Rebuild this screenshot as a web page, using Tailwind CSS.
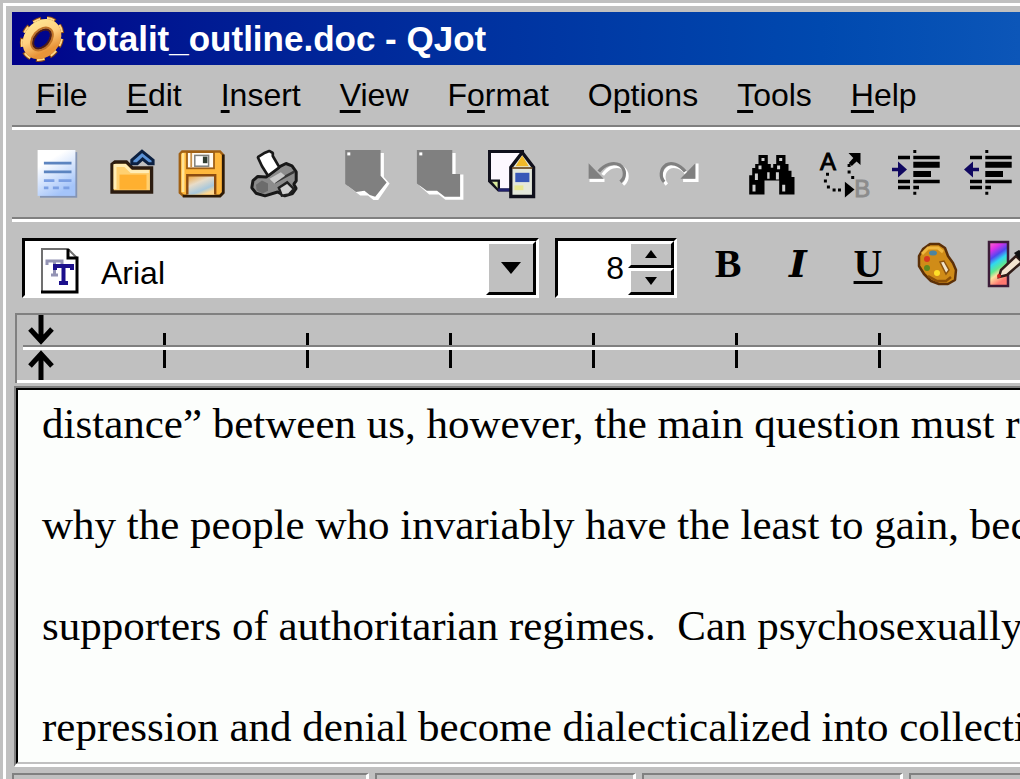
<!DOCTYPE html>
<html lang="en">
<head>
    <meta charset="UTF-8" />
    <title>totalit_outline.doc - QJot</title>
    <script src="https://cdn.jsdelivr.net/npm/@tailwindcss/browser@4"></script>
</head>
<body class="bg-[#c0c0c0] font-['Liberation_Sans',Arial,sans-serif] text-[32px] text-black">

<div class="h-screen overflow-hidden flex flex-col pt-[3px] pl-[3px]">
<div class="flex-1 min-h-0 flex flex-col border-t-3 border-l-3 border-white pt-[6px] pl-[6px]">

    <!-- Title bar -->
    <header class="flex items-center gap-2 h-[53px] shrink-0 pl-[6px] bg-linear-to-r from-[#00008a] to-[#0c56b8]">
        <svg class="w-12 h-12 shrink-0" viewBox="0 0 48 48" aria-hidden="true">
            <defs>
                <linearGradient id="gold" x1="0" y1="0" x2="1" y2="0.6">
                    <stop offset="0" stop-color="#ffe490" />
                    <stop offset="0.5" stop-color="#ffd080" />
                    <stop offset="1" stop-color="#e89438" />
                </linearGradient>
            </defs>
            <g transform="rotate(40 24 24)" fill="none">
                <ellipse cx="24" cy="24" rx="17" ry="21" stroke="#8a4818" stroke-width="7" stroke-dasharray="8 5.3" />
                <ellipse cx="24" cy="24" rx="17" ry="21" stroke="#ffd888" stroke-width="5" stroke-dasharray="7 6.3" />
                <ellipse cx="24" cy="24" rx="12" ry="16" stroke="#a05c20" stroke-width="11" />
                <ellipse cx="24" cy="24" rx="12.5" ry="16.5" stroke="url(#gold)" stroke-width="10" />
                <ellipse cx="24" cy="24" rx="9" ry="13" stroke="#c07428" stroke-width="2" />
                <ellipse cx="24" cy="24" rx="7" ry="11" stroke="#4c1c18" stroke-width="2" />
            </g>
        </svg>
        <h1 class="text-[35px] leading-none font-bold text-white whitespace-nowrap">totalit_outline.doc - QJot</h1>
    </header>

    <!-- Menu bar -->
    <nav class="flex items-center gap-[39px] h-[60px] shrink-0 pl-6 whitespace-nowrap">
        <a href="#file"><span class="underline decoration-3 underline-offset-4">F</span>ile</a>
        <a href="#edit"><span class="underline decoration-3 underline-offset-4">E</span>dit</a>
        <a href="#insert"><span class="underline decoration-3 underline-offset-4">I</span>nsert</a>
        <a href="#view"><span class="underline decoration-3 underline-offset-4">V</span>iew</a>
        <a href="#format">F<span class="underline decoration-3 underline-offset-4">o</span>rmat</a>
        <a href="#options">O<span class="underline decoration-3 underline-offset-4">p</span>tions</a>
        <a href="#tools"><span class="underline decoration-3 underline-offset-4">T</span>ools</a>
        <a href="#help"><span class="underline decoration-3 underline-offset-4">H</span>elp</a>
    </nav>
    <div class="h-[5px] shrink-0 border-t-2 border-b-3 border-t-[#808080] border-b-white"></div>

    <!-- Standard toolbar -->
    <div class="flex items-center gap-[22px] h-[87px] shrink-0 pl-[10px]">
        <div class="flex">
            <button type="button" aria-label="New" class="w-[72px] shrink-0 flex justify-center">
                <svg class="w-12 h-12 overflow-visible" viewBox="0 0 16 16">
                    <defs>
                        <linearGradient id="sheet" x1="0" y1="0" x2="0.5" y2="1">
                            <stop offset="0.3" stop-color="#ffffff" />
                            <stop offset="1" stop-color="#a4c4fa" />
                        </linearGradient>
                    </defs>
                    <rect x="2" y="0.7" width="12.4" height="15.2" fill="#8494b4" />
                    <rect x="1.2" y="0" width="12.6" height="15.3" fill="url(#sheet)" />
                    <path d="M3.3 4.4h9.2M3.3 7.3h9.2" stroke="#5c84c0" stroke-width="0.9" />
                    <path d="M3.3 10.2h3.5m1.4 0h4.3M3.3 12.6h1.5m1.5 0h2m1.5 0h2" stroke="#7ca0e4" stroke-width="0.9" />
                </svg>
            </button>
            <button type="button" aria-label="Open" class="w-[72px] shrink-0 flex justify-center">
                <svg class="w-12 h-12 overflow-visible" viewBox="0 0 16 16">
                    <path d="M2 14V4.8L3 4h3.8l2 2h6.4v8z" fill="#ffd070" stroke="#2c1c10" stroke-width="1.1" />
                    <path d="M3 13V5.2h3.4l2 2h5.9" fill="none" stroke="#ffecb4" stroke-width="1" />
                    <rect x="4.5" y="8.2" width="9" height="5" fill="#ffb030" />
                    <path d="M8.6 3.4L12 0.4l3.7 3V4.600h-1.500L12.200 3 10.400 4.600H8.600z" fill="#5c94d8" stroke="#0c2040" stroke-width="1" />
                </svg>
            </button>
            <button type="button" aria-label="Save" class="w-[72px] shrink-0 flex justify-center">
                <svg class="w-12 h-12 overflow-visible" viewBox="0 0 16 16">
                    <defs>
                        <linearGradient id="label" x1="0" y1="0" x2="0.6" y2="1">
                            <stop offset="0" stop-color="#f0a030" />
                            <stop offset="0.45" stop-color="#e8dcc8" />
                            <stop offset="0.8" stop-color="#a8c8dc" />
                            <stop offset="1" stop-color="#ffd890" />
                        </linearGradient>
                    </defs>
                    <path d="M1.4 0.5H14L15 1.6V14.3L14 15.3H1.8L0.6 14.2V1.3z" fill="#ffb83c" stroke="#a06014" stroke-width="0.8" />
                    <path d="M15.1 1.5V14.2L14 15.4H1.6" fill="none" stroke="#2c1a08" stroke-width="0.9" />
                    <path d="M1.7 1v13" stroke="#ffe498" stroke-width="0.9" />
                    <rect x="3" y="0.7" width="9" height="5.4" fill="#fffaf0" stroke="#a06014" stroke-width="0.6" />
                    <path d="M4.4 1v4.8" stroke="#c89048" stroke-width="0.6" />
                    <rect x="5.6" y="1.8" width="4.6" height="3.6" fill="#fff" stroke="#80807c" stroke-width="0.5" />
                    <rect x="8.3" y="2.2" width="1.5" height="2.2" fill="#303c30" />
                    <rect x="3.1" y="8.3" width="9.3" height="6.6" fill="url(#label)" />
                    <path d="M3.1 14.8V8.4h9.3v6.4" fill="none" stroke="#8c4c10" stroke-width="0.8" />
                </svg>
            </button>
            <button type="button" aria-label="Print" class="w-[72px] shrink-0 flex justify-center">
                <svg class="w-12 h-12 overflow-visible" viewBox="0 0 16 16">
                    <path d="M1 10.2L2.6 8.8 5.4 9l4-3.2L12 4.5l2 .8 1.4 2v3l-.8 1.1.8 1.4-1.2 1.7-2.6.8L9.2 14 5 15.3 2 14.4.6 12.6z" fill="#8c8c8c" stroke="#181818" stroke-width="1" stroke-linejoin="bevel" />
                    <path d="M8.2 10.8L14.8 7.2" stroke="#383838" stroke-width="0.8" />
                    <path d="M6.5 9.6l3.8-2.2 1.4 1.2-3.6 2.6z" fill="#c8c8c8" />
                    <path d="M9.6 12.6l2.8-1.8 2.2 2.2-1.6 1.8-2.4.4z" fill="#d0d0d0" stroke="#202020" stroke-width="0.8" />
                    <path d="M2 11.6l2-1.4 2 1v2.4l-1.8.9-2-1z" fill="#6c6c6c" />
                    <path d="M2.6 2.4L5 0.9 6.4.3 7.6 1v1l2.2 3.8-3.8 2.8L4 5.4z" fill="#fff" stroke="#181818" stroke-width="0.9" stroke-linejoin="bevel" />
                </svg>
            </button>
        </div>
        <div class="flex">
            <button type="button" aria-label="Cut" class="w-[72px] shrink-0 flex justify-center">
                <svg class="w-12 h-12 overflow-visible" viewBox="0 0 16 16">
                    <path d="M1.3 1h12v8l1.9 2.2-3.8 5.5H9.8L8 15.2H5.4L1.3 12z" fill="#fff" />
                    <path d="M.4 0h11.8v8.6l2 2.2L10.4 15.6 8.6 15 6.800 13.600 4 14 .400 11.300z" fill="#808080" />
                    <rect x="1.1" y="0.8" width="1" height="1" fill="#fff" />
                </svg>
            </button>
            <button type="button" aria-label="Copy" class="w-[72px] shrink-0 flex justify-center">
                <svg class="w-12 h-12 overflow-visible" viewBox="0 0 16 16">
                    <path d="M1.2 1h12v7.2h2.600v8.400h-6L7.600 14.800H4.400L1.200 12z" fill="#fff" />
                    <path d="M.3 0h11.800v8h2.600v7.600H9.600L7 13.600H3.600L.300 11.200z" fill="#808080" />
                    <rect x="1.1" y="0.8" width="1" height="1" fill="#fff" />
                </svg>
            </button>
            <button type="button" aria-label="Paste" class="w-[72px] shrink-0 flex justify-center">
                <svg class="w-12 h-12 overflow-visible" viewBox="0 0 16 16">
                    <path d="M.5.5h11v12.8h-8L.5 10.4z" fill="#fdf8ff" stroke="#10101c" stroke-width="1" />
                    <path d="M1 10.2h2.6v3" fill="#d8e89c" stroke="#10101c" stroke-width="0.8" />
                    <path d="M3.4 13.3h4" stroke="#20206c" stroke-width="1" />
                    <path d="M11.4.8l-3.8 5v9.7h7.6V5.8z" fill="#e4e8dc" stroke="#10101c" stroke-width="1.1" />
                    <path d="M11.4 1.8L9.2 5.4h4.4z" fill="#f0b828" />
                    <path d="M8 6h6.8" stroke="#705028" stroke-width="0.6" />
                    <rect x="9.1" y="7.6" width="4.7" height="3.1" fill="#3858b8" />
                    <path d="M8.8 12.6h3" stroke="#e8e890" stroke-width="1.6" />
                </svg>
            </button>
        </div>
        <div class="flex">
            <button type="button" aria-label="Undo" class="w-[72px] shrink-0 flex justify-center">
                <svg class="w-12 h-12 overflow-visible" viewBox="0 0 16 16">
                    <g transform="translate(0.9 0.9)" fill="none" stroke="#fff">
                        <path d="M6 7.4C8 4.6 10.6 4 12.6 5c2 1.4 2 4.2.2 5.600" stroke-width="1.1" />
                        <path d="M1.600 9.200h5" stroke-width="1.1" />
                    </g>
                    <path d="M5.6 7.2C7.6 4.6 10.6 4 12.6 5c2 1.4 2 4.2.2 5.600" fill="none" stroke="#808080" stroke-width="1.1" />
                    <path d="M2.2 4.4V9.600h5z" fill="#808080" />
                </svg>
            </button>
            <button type="button" aria-label="Redo" class="w-[72px] shrink-0 flex justify-center">
                <svg class="w-12 h-12 overflow-visible" viewBox="0 0 16 16">
                    <g transform="translate(0.9 0.9)" fill="none" stroke="#fff">
                        <path d="M10 7.200C8.400 4.600 5.600 4 4 5 2 6.400 2 9.200 3.400 10.600" stroke-width="1.1" />
                        <path d="M8.800 9.200h4.600V3.600" stroke-width="1.1" />
                    </g>
                    <path d="M10.400 7.200C8.400 4.600 5.600 4 4 5 2 6.400 2 9.200 3.400 10.600" fill="none" stroke="#808080" stroke-width="1.1" />
                    <path d="M13.800 4.400V9.600H8.800z" fill="#808080" />
                </svg>
            </button>
        </div>
        <div class="flex">
            <button type="button" aria-label="Find" class="w-[72px] shrink-0 flex justify-center">
                <svg class="w-12 h-12 overflow-visible" viewBox="0 0 16 16">
                    <path d="M3.500 1.700h3.100v3h1v1.200h.8V4.700h1v-3h3.100v3h1v2.200h1V9h1v5.800h-5.100v-4.600H5.500v4.600H.400V8.400h1V6h1V4.700h1.100z" fill="#000" />
                    <path d="M4.500 2.700h1v1h-1zM10.400 2.700h1v1h-1zM3.500 5.200h1v1.200h-1zM2.300 7.800h1v2.200h-1zM9.300 7.400h1v2.400h-1zM9.700 5.200h1v1.200h-1zM1.500 11.600h1v2.200h-1zM11.400 11.600h1v2.200h-1zM6.400 7.400h.8v2.200h-.8z" fill="#d0d0d0" />
                </svg>
            </button>
            <button type="button" aria-label="Replace" class="w-[72px] shrink-0 flex justify-center">
                <svg class="w-12 h-12 overflow-visible" viewBox="0 0 16 16">
                    <text x="0" y="6.600" font-size="8" fill="#000" stroke="#000" stroke-width="0.3">A</text>
                    <text x="11.400" y="15.500" font-size="8" fill="#8c8c8c" stroke="#8c8c8c" stroke-width="0.3">B</text>
                    <path d="M9.500 1h4v4l-1.300-1.200-1.600 1.500-1-1 1.500-1.600z" fill="#000" />
                    <path d="M9.200 4.700h1v1h-1zM9.200 6.800h1v1h-1zM10.400 8.700h1v1h-1zM2 7.600h1v1H2zM1.300 9.800h1v1h-1zM2.300 11.800h1v1h-1zM4.200 12.800h1v1h-1zM6 12.800h1v1H6z" fill="#000" />
                    <path d="M8.300 10.600v5.200l3.200-2.600z" fill="#000" />
                </svg>
            </button>
            <button type="button" aria-label="Increase indent" class="w-[72px] shrink-0 flex justify-center">
                <svg class="w-12 h-12 overflow-visible" viewBox="0 0 16 16">
                    <path d="M7.100 0h1v1h-1zM7.100 13.900h1v1h-1zM2 1.900h4v1.200H2zM7.100 1.900h8.800v1.200H7.100zM7.100 3.900h8.800v2H7.100zM7.100 7h5.900v2H7.100zM2 9.900h4v1.200H2zM7.100 9.900h8.800v1.200H7.100zM2 11.900h4v1.200H2zM7.100 11.900h1.900v1.200H7.100z" fill="#000" />
                    <path d="M0 5.900h2V3.800L5 6.500 2 9.200V7.100H0z" fill="#100860" />
                </svg>
            </button>
            <button type="button" aria-label="Decrease indent" class="w-[72px] shrink-0 flex justify-center">
                <svg class="w-12 h-12 overflow-visible" viewBox="0 0 16 16">
                    <path d="M7.100 0h1v1h-1zM7.100 13.900h1v1h-1zM2 1.900h4v1.200H2zM7.100 1.900h8.800v1.200H7.100zM7.100 3.900h8.800v2H7.100zM7.100 7h5.900v2H7.100zM2 9.900h4v1.200H2zM7.100 9.900h8.800v1.200H7.100zM2 11.900h4v1.200H2zM7.100 11.900h1.900v1.200H7.100z" fill="#000" />
                    <path d="M5 5.900H3V3.800L0 6.500 3 9.200V7.100H5z" fill="#100860" />
                </svg>
            </button>
        </div>
    </div>
    <div class="h-[5px] shrink-0 border-t-2 border-b-3 border-t-[#808080] border-b-white"></div>

    <!-- Format toolbar -->
    <div class="flex items-center h-[91px] shrink-0 pl-[10px]">
        <div class="flex w-[517px] h-[60px] shrink-0 border-3 border-t-black border-l-black border-r-white border-b-white bg-white">
            <svg class="w-12 h-12 shrink-0 self-end ml-3" viewBox="0 0 48 48" aria-hidden="true">
                <path d="M5 2h26l9 9v34H5z" fill="#fff" stroke="#707070" stroke-width="2" />
                <path d="M31 2v9h9v34H4" fill="none" stroke="#000" stroke-width="3" />
                <path d="M10 18v-4h15v4M17.500 14v14M14 28h7" fill="none" stroke="#9494b4" stroke-width="3" />
                <path d="M18 23v-4h17v4M26.500 19v17M22 36h9" fill="none" stroke="#1c108c" stroke-width="4" />
            </svg>
            <select aria-label="Font" class="flex-1 min-w-0 appearance-none bg-transparent pl-4 pt-2 outline-none">
                <option>Arial</option>
                <option>Times New Roman</option>
            </select>
            <span class="w-[50px] shrink-0 flex items-center justify-center bg-[#c0c0c0] border-3 border-t-white border-l-white border-r-black border-b-black pointer-events-none">
                <svg class="w-5 h-3" viewBox="0 0 20 12" aria-hidden="true"><path d="M0 0h20L10 12z" /></svg>
            </span>
        </div>
        <div class="flex w-[122px] h-[60px] shrink-0 ml-4 border-3 border-t-black border-l-black border-r-white border-b-white bg-white">
            <input type="text" value="8" aria-label="Font size" class="flex-1 min-w-0 text-right pr-1 outline-none" />
            <div class="w-[46px] shrink-0 flex flex-col">
                <button type="button" aria-label="Larger" class="flex-1 flex items-center justify-center bg-[#c0c0c0] border-3 border-t-white border-l-white border-r-black border-b-black">
                    <svg class="w-3 h-2" viewBox="0 0 12 8"><path d="M0 8h12L6 0z" /></svg>
                </button>
                <button type="button" aria-label="Smaller" class="flex-1 flex items-center justify-center bg-[#c0c0c0] border-3 border-t-white border-l-white border-r-black border-b-black">
                    <svg class="w-3 h-2" viewBox="0 0 12 8"><path d="M0 0h12L6 8z" /></svg>
                </button>
            </div>
        </div>
        <div class="flex items-center ml-4 pb-2 font-['Liberation_Serif',serif] text-[40px] leading-[44px] font-bold">
            <button type="button" aria-label="Bold" class="w-[70px] shrink-0">B</button>
            <button type="button" aria-label="Italic" class="w-[70px] shrink-0 font-['DejaVu_Serif',serif] text-[38px] italic">I</button>
            <button type="button" aria-label="Underline" class="w-[70px] shrink-0 underline decoration-3 underline-offset-4">U</button>
            <button type="button" aria-label="Text colour" class="w-[70px] shrink-0 flex justify-center">
                <svg class="w-12 h-12" viewBox="0 0 48 48">
                    <path d="M9 9l7-5h9l6 4 3 8 5 7 3 7-1 10-7 4h-9l-8-3-7-7-5-8V16z" fill="#d08c18" stroke="#5c3008" stroke-width="2.500" stroke-linejoin="bevel" />
                    <path d="M8 14l6-6h10l5 4" fill="none" stroke="#f0b840" stroke-width="3" />
                    <path d="M14 36l9 5h9l5-4" fill="none" stroke="#8c5008" stroke-width="2.500" />
                    <ellipse cx="19" cy="13" rx="4" ry="2.500" fill="#4c84a0" />
                    <circle cx="13" cy="19" r="3" fill="#d83820" />
                    <circle cx="13" cy="28" r="3" fill="#608820" />
                    <circle cx="23" cy="33" r="3" fill="#ffe028" />
                    <path d="M26 22l4-1 5 9-3 4z" fill="#f0e4cc" stroke="#8c5410" stroke-width="1.500" />
                </svg>
            </button>
            <button type="button" aria-label="Highlight" class="w-[70px] shrink-0 flex justify-center">
                <svg class="w-12 h-12" viewBox="0 0 48 48">
                    <defs>
                        <linearGradient id="spectrum" x1="0" y1="0" x2="0.300" y2="1">
                            <stop offset="0" stop-color="#ff70c0" />
                            <stop offset="0.200" stop-color="#e030e8" />
                            <stop offset="0.380" stop-color="#5048f0" />
                            <stop offset="0.520" stop-color="#30d8f0" />
                            <stop offset="0.680" stop-color="#60e890" />
                            <stop offset="0.800" stop-color="#ffe0a0" />
                            <stop offset="1" stop-color="#ff7870" />
                        </linearGradient>
                    </defs>
                    <rect x="5" y="2" width="19" height="44" fill="url(#spectrum)" stroke="#3c1c38" stroke-width="2.500" />
                    <path d="M15 37l2-7 15-14 6 6-15 13z" fill="#f4e4d0" stroke="#301c18" stroke-width="2.500" />
                    <path d="M30 13l5-3 9 7-5 6z" fill="#101010" />
                    <circle cx="15" cy="36" r="2" fill="#d02020" />
                </svg>
            </button>
        </div>
    </div>

    <!-- Ruler -->
    <div class="shrink-0 ml-[3px] border-t-2 border-l-2 border-[#808080]">
        <div class="flex items-end h-[30px]">
            <div class="w-[146px] shrink-0 pl-[11px]">
                <svg class="w-[26px] h-[30px]" viewBox="0 0 26 30" aria-hidden="true"><path d="M13 0v27M2 14l11 12 11-12" fill="none" stroke="#000" stroke-width="5" /></svg>
            </div>
            <div class="w-[143px] h-3 shrink-0 border-l-3"></div>
            <div class="w-[143px] h-3 shrink-0 border-l-3"></div>
            <div class="w-[143px] h-3 shrink-0 border-l-3"></div>
            <div class="w-[143px] h-3 shrink-0 border-l-3"></div>
            <div class="w-[143px] h-3 shrink-0 border-l-3"></div>
            <div class="w-[143px] h-3 shrink-0 border-l-3"></div>
        </div>
        <div class="ml-[6px] h-[5px] border-t-2 border-b-3 border-t-[#808080] border-b-white"></div>
        <div class="flex items-start h-[30px]">
            <div class="w-[146px] shrink-0 pl-[11px]">
                <svg class="w-[26px] h-[30px]" viewBox="0 0 26 30" aria-hidden="true"><path d="M13 30V3M2 16L13 4l11 12" fill="none" stroke="#000" stroke-width="5" /></svg>
            </div>
            <div class="w-[143px] h-[18px] shrink-0 border-l-3"></div>
            <div class="w-[143px] h-[18px] shrink-0 border-l-3"></div>
            <div class="w-[143px] h-[18px] shrink-0 border-l-3"></div>
            <div class="w-[143px] h-[18px] shrink-0 border-l-3"></div>
            <div class="w-[143px] h-[18px] shrink-0 border-l-3"></div>
            <div class="w-[143px] h-[18px] shrink-0 border-l-3"></div>
        </div>
        <div class="h-[3px] bg-white"></div>
    </div>

    <!-- Document -->
    <main class="flex-1 min-h-0 flex flex-col ml-[2px] mt-[3px] border-t-2 border-l-2 border-b-3 border-t-[#808080] border-l-[#808080] border-b-white">
        <div role="textbox" aria-multiline="true" aria-label="Document" contenteditable="true" spellcheck="false" class="flex-1 min-h-0 overflow-hidden border-t-2 border-l-2 border-black border-b-2 border-b-[#c0c0c0] bg-[#fcfefc] pl-6 pt-3 outline-none whitespace-nowrap font-['Liberation_Serif',serif] text-[43px] leading-[43px] space-y-[58px]">
            <p>distance” between us, however, the main question must r</p>
            <p>why the people who invariably have the least to gain, bec</p>
            <p>supporters of authoritarian regimes.&nbsp; Can psychosexually</p>
            <p>repression and denial become dialecticalized into collecti</p>
        </div>
    </main>

    <!-- Status bar -->
    <footer class="flex gap-[6px] h-3 shrink-0 pt-[6px]">
        <div class="w-[357px] shrink-0 border-t-2 border-l-2 border-r-3 border-t-[#808080] border-l-[#808080] border-r-white"></div>
        <div class="w-[261px] shrink-0 border-t-2 border-l-2 border-r-3 border-t-[#808080] border-l-[#808080] border-r-white"></div>
        <div class="w-[261px] shrink-0 border-t-2 border-l-2 border-r-3 border-t-[#808080] border-l-[#808080] border-r-white"></div>
        <div class="flex-1 border-t-2 border-l-2 border-[#808080]"></div>
    </footer>

</div>
</div>

</body>
</html>
